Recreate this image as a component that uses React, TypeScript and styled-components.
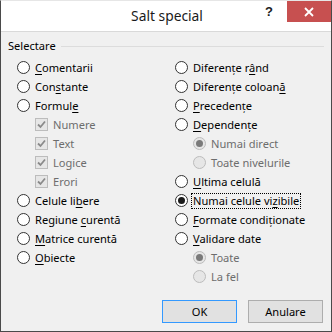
import { ReactNode } from 'react';
import styled, { createGlobalStyle, css } from 'styled-components';

const GlobalStyle = createGlobalStyle`
	html, body {
		margin: 0;
		padding: 0;
		background: #ffffff;
	}
	* {
		box-sizing: border-box;
	}
`;

const Window = styled.div`
	width: 332px;
	height: 332px;
	display: flex;
	flex-direction: column;
	background: #f0f0f0;
	border: 1px solid #4a4a4a;
	border-top: 1px solid #e6e6e6;
	font-family: 'Noto Sans', 'Open Sans', sans-serif;
	font-size: 11.1px;
	color: #000;
`;

const TitleBar = styled.div`
	height: 31px;
	flex-shrink: 0;
	display: grid;
	grid-template-columns: 68px minmax(0, 1fr) 22px 44px;
	align-items: start;
	background: #ffffff;
	border-bottom: 1px solid #d9d9d9;
`;

const Title = styled.div`
	grid-column: 2;
	padding-top: 5px;
	text-align: center;
	font-size: 13.8px;
	line-height: 20px;
	color: #1a1a1a;
`;

const HelpButton = styled.div`
	grid-column: 3;
	height: 21px;
	display: flex;
	justify-content: flex-start;
	align-items: center;
	font-family: 'Liberation Sans', sans-serif;
	font-weight: bold;
	font-size: 13px;
	color: #202020;
`;

const CloseButton = styled.div`
	grid-column: 4;
	height: 21px;
	display: flex;
	justify-content: center;
	align-items: center;
	background: #c75050;
`;

const Body = styled.div`
	flex: 1;
	display: flex;
	flex-direction: column;
	padding: 6px 7px 8px 7px;
`;

const Legend = styled.div`
	display: flex;
	align-items: center;
	height: 16px;
	line-height: 16px;

	&::after {
		content: '';
		flex: 1;
		height: 1px;
		margin-left: 5px;
		background: #dcdcdc;
	}
`;

const Columns = styled.div`
	display: grid;
	grid-template-columns: 158px 1fr;
	padding: 4px 0 0 9px;
`;

const Column = styled.div`
	display: flex;
	flex-direction: column;
`;

const Row = styled.div<{ $indent?: boolean; $disabled?: boolean }>`
	display: flex;
	align-items: center;
	height: 19px;
	gap: 4px;
	padding-left: ${(p) => (p.$indent ? '18px' : '0')};
	color: ${(p) => (p.$disabled ? '#6d6d6d' : '#000')};
	white-space: nowrap;
`;

const Label = styled.span<{ $focus?: boolean }>`
	line-height: 14px;
	padding: 0 1px;
	margin-left: -1px;
	border: 1px solid transparent;
	${(p) =>
		p.$focus &&
		css`
			border: 1px dotted #000;
		`}

	u {
		text-decoration-thickness: 1px;
		text-underline-offset: 2px;
	}
`;

const RadioCircle = styled.span<{ $checked?: boolean; $disabled?: boolean }>`
	width: 13px;
	height: 13px;
	flex-shrink: 0;
	border-radius: 50%;
	border: 1px solid ${(p) => (p.$disabled ? '#bcbcbc' : '#333333')};
	background: ${(p) => (p.$disabled ? '#e6e6e6' : '#ffffff')};
	display: flex;
	justify-content: center;
	align-items: center;

	&::after {
		content: '';
		display: ${(p) => (p.$checked ? 'block' : 'none')};
		width: 7px;
		height: 7px;
		border-radius: 50%;
		background: ${(p) => (p.$disabled ? '#7a7a7a' : '#1a1a1a')};
	}
`;

const CheckBox = styled.span`
	width: 13px;
	height: 13px;
	flex-shrink: 0;
	border: 1px solid #bcbcbc;
	background: #e6e6e6;
	display: flex;
	justify-content: center;
	align-items: center;
`;

const Buttons = styled.div`
	margin-top: auto;
	display: flex;
	justify-content: flex-end;
	gap: 11px;
	padding-right: 1px;
`;

const Button = styled.div<{ $default?: boolean }>`
	width: 75px;
	height: 23px;
	display: flex;
	justify-content: center;
	align-items: center;
	background: #e1e1e1;
	border: 1px solid ${(p) => (p.$default ? '#3399ff' : '#adadad')};
`;

function Radio({
	children,
	checked,
	disabled,
	indent,
	focus,
}: {
	children: ReactNode;
	checked?: boolean;
	disabled?: boolean;
	indent?: boolean;
	focus?: boolean;
}) {
	return (
		<Row $indent={indent} $disabled={disabled}>
			<RadioCircle $checked={checked} $disabled={disabled} />
			<Label $focus={focus}>{children}</Label>
		</Row>
	);
}

function Check({ children }: { children: ReactNode }) {
	return (
		<Row $indent $disabled>
			<CheckBox>
				<svg width="9" height="9" viewBox="0 0 9 9">
					<path d="M1 4.5 L3.5 7 L8 1.5" fill="none" stroke="#8a8a8a" strokeWidth="1.8" />
				</svg>
			</CheckBox>
			<Label>{children}</Label>
		</Row>
	);
}

export default function App() {
	return (
		<>
			<GlobalStyle />
			<Window>
				<TitleBar>
					<Title>Salt special</Title>
					<HelpButton>?</HelpButton>
					<CloseButton>
						<svg width="10" height="10" viewBox="0 0 10 10">
							<path d="M1 1 L9 9 M9 1 L1 9" stroke="#ffffff" strokeWidth="1.8" />
						</svg>
					</CloseButton>
				</TitleBar>
				<Body>
					<Legend>Selectare</Legend>
					<Columns>
						<Column>
							<Radio>
								<u>C</u>omentarii
							</Radio>
							<Radio>
								Con<u>s</u>tante
							</Radio>
							<Radio>
								Formul<u>e</u>
							</Radio>
							<Check>Numere</Check>
							<Check>Text</Check>
							<Check>Logice</Check>
							<Check>Erori</Check>
							<Radio>
								Celule li<u>b</u>ere
							</Radio>
							<Radio>
								Regiune <u>c</u>urentă
							</Radio>
							<Radio>
								<u>M</u>atrice curentă
							</Radio>
							<Radio>
								<u>O</u>biecte
							</Radio>
						</Column>
						<Column>
							<Radio>
								Diferențe r<u>â</u>nd
							</Radio>
							<Radio>
								Diferențe coloan<u>ă</u>
							</Radio>
							<Radio>
								<u>P</u>recedențe
							</Radio>
							<Radio>
								<u>D</u>ependențe
							</Radio>
							<Radio indent disabled checked>
								Numai direct
							</Radio>
							<Radio indent disabled>
								Toate nivelurile
							</Radio>
							<Radio>
								<u>U</u>ltima celulă
							</Radio>
							<Radio checked focus>
								Numai celule vi<u>z</u>ibile
							</Radio>
							<Radio>
								<u>F</u>ormate condiționate
							</Radio>
							<Radio>
								<u>V</u>alidare date
							</Radio>
							<Radio indent disabled checked>
								Toate
							</Radio>
							<Radio indent disabled>
								La fel
							</Radio>
						</Column>
					</Columns>
					<Buttons>
						<Button $default>OK</Button>
						<Button>Anulare</Button>
					</Buttons>
				</Body>
			</Window>
		</>
	);
}
